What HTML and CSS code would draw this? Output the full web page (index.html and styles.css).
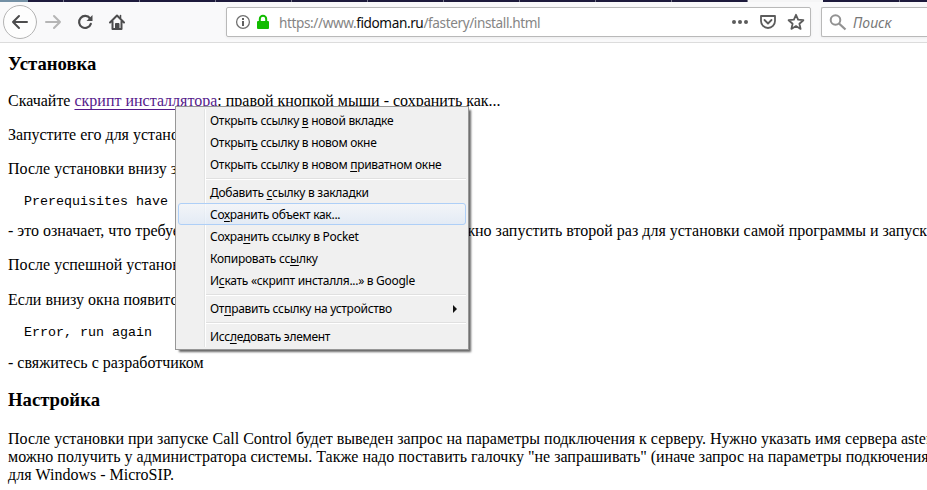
FILE: index.html
```
<!DOCTYPE html>
<html lang="ru">
<head>
<meta charset="utf-8">
<title>Установка</title>
<link rel="stylesheet" href="styles.css">
</head>
<body>
<div class="tabs"><i class="tab-first"></i><i class="tab-bg"></i><i class="tab-active"></i><i class="tab-bg tab-last"></i></div>
<header class="toolbar">
  <nav class="nav">
    <svg width="136" height="39" viewBox="0 3 136 39" fill="none" stroke="#4c4c4d" stroke-width="2" stroke-linecap="round" stroke-linejoin="round">
      <circle cx="20" cy="22" r="16.500" fill="#fdfdfd" stroke="#b4b4b4" stroke-width="1"/>
      <path d="M27 22H13M19 16l-6 6 6 6"/>
      <path stroke="#b5b5b5" d="M46 22h14M54 16l6 6-6 6"/>
      <path d="M90 18.500a6 6 0 1 0 .8 5.300" stroke-width="2.200"/>
      <path d="M92.500 15v6h-6z" fill="#4c4c4d" stroke="none"/>
      <path d="M110 22.500l7-7 7 7M112.500 21.500v7.500h9v-7.500"/>
      <path d="M120.500 15.500v2.500" stroke-width="1.500"/>
      <path d="M115.500 29v-5.500h3.500v5.500z" fill="#4c4c4d" stroke-width="1"/>
    </svg>
  </nav>
  <div class="urlbar">
    <svg width="42" height="28" viewBox="227 8 42 28">
      <circle cx="243" cy="22" r="6.400" fill="none" stroke="#707070" stroke-width="1.300"/>
      <path fill="#606060" d="M242 18h2v2h-2zM242 21h2v5h-2z"/>
      <rect x="257" y="21" width="12" height="8" rx="1" fill="#12bc00"/>
      <path d="M259.800 22v-3a3.200 3.200 0 0 1 6.400 0v3" fill="none" stroke="#12bc00" stroke-width="2"/>
    </svg>
    <span class="url">https://www.<b>fidoman.ru</b>/fastery/install.html</span>
    <svg class="actions" width="76" height="28" viewBox="730 8 76 28" fill="none" stroke="#5c5c5c" stroke-width="1.800" stroke-linejoin="round" stroke-linecap="round">
      <g fill="#5c5c5c" stroke="none"><circle cx="734" cy="22" r="2"/><circle cx="740" cy="22" r="2"/><circle cx="746" cy="22" r="2"/></g>
      <path d="M761 16h14v5a7 7 0 0 1-14 0z"/><path d="M764.500 20l3.500 3.500 3.500-3.500"/>
      <path d="M796 14.800l2.100 4.900 5.300.5-4 3.500 1.200 5.200-4.600-2.800-4.600 2.800 1.200-5.200-4-3.500 5.300-.5z"/>
    </svg>
  </div>
  <div class="search">
    <svg width="18" height="28" viewBox="829 8 18 28" fill="none" stroke="#929292" stroke-width="2"><circle cx="835.500" cy="20" r="4.800"/><path d="M839 23.500l6.500 6" stroke-width="2.300"/></svg>
    <span>Поиск</span>
  </div>
</header>
<main>
  <h3>Установка</h3>
  <p>Скачайте <a>скрипт инсталлятора</a>: правой кнопкой мыши - сохранить как...</p>
  <p>Запустите его для установки</p>
  <p>После установки внизу за</p>
  <pre>Prerequisites have</pre>
  <p class="split"><span class="split-start">- это означает, что требуется</span><span>жно запустить второй раз для установки самой программы и запуск</span></p>
  <p>После успешной установки</p>
  <p class="late">Если внизу окна появится</p>
  <pre>Error, run again</pre>
  <p>- свяжитесь с разработчиком</p>
  <h3 class="second">Настройка</h3>
  <p>После установки при запуске Call Control будет выведен запрос на параметры подключения к серверу. Нужно указать имя сервера asterisk<br>можно получить у администратора системы. Также надо поставить галочку "не запрашивать" (иначе запрос на параметры подкючения<br>для Windows - MicroSIP.</p>
</main>
<div class="menu">
  <div class="item"><span>Открыть ссылку <u>в</u> новой вкладке</span></div>
  <div class="item"><span>Открыт<u>ь</u> ссылку в новом окне</span></div>
  <div class="item"><span>Открыть ссылку в новом <u>п</u>риватном окне</span></div>
  <div class="sep"></div>
  <div class="item"><span>Добавить <u>с</u>сылку в закладки</span></div>
  <div class="item active"><span>Со<u>х</u>ранить объект как...</span></div>
  <div class="item"><span>Сохра<u>н</u>ить ссылку в Pocket</span></div>
  <div class="item"><span>Копировать сс<u>ы</u>лку</span></div>
  <div class="item"><span>И<u>с</u>кать «скрипт инсталля...» в Google</span></div>
  <div class="sep"></div>
  <div class="item"><span>От<u>п</u>равить ссылку на устройство</span><i class="arrow"></i></div>
  <div class="sep"></div>
  <div class="item"><span>Исс<u>л</u>едовать элемент</span></div>
</div>
</body>
</html>
```
FILE: styles.css
```
* { box-sizing: border-box; }
body { margin: 0; width: 927px; height: 490px; overflow: hidden; background: #fff; color: #000; font: 16px/18px "Liberation Serif", serif; }
.tabs { display: flex; height: 2px; background: #1d1a3c; }
.tabs i { flex: none; }
.tab-first { width: 28px; background: #7390a5; }
.tab-bg { width: 720px; background: repeating-linear-gradient(90deg, transparent 0 35px, #77778a 35px 36px, transparent 36px 76px); }
.tab-active { width: 75px; background: #f5f5f6; }
.tabs .tab-last { width: 104px; background-position: 41px 0; background-repeat: no-repeat; }
.toolbar { display: flex; height: 41px; background: #f9f9fa; border-bottom: 1px solid #dcdcdc; padding-top: 5px; }
.nav { width: 226px; margin-top: -4px; height: 39px; }
.nav svg, .urlbar svg, .search svg { display: block; flex: none; }
.urlbar, .search { display: flex; height: 30px; background: #fff; border: 1px solid #b9b9b9; border-radius: 2px; box-shadow: 0 1px 3px rgba(0,0,0,.06); font: 13.6px/30px "Noto Sans", sans-serif; }
.urlbar { width: 585px; color: #858585; }
.url { margin-left: 10px; white-space: nowrap; letter-spacing: -.4px; }
.url b { font-weight: 400; color: #0c0c0d; }
.urlbar .actions { margin-left: auto; margin-right: 4px; }
.search { margin-left: 10px; flex: 1; padding-left: 7px; border-right: 0; border-radius: 2px 0 0 2px; color: #777; font-size: 14px; font-style: italic; }
.search span { margin-left: 6px; }
main { padding: 10px 0 0 8px; white-space: nowrap; }
h3 { margin: 0 0 18px; font-size: 18.72px; line-height: 21px; }
p { margin: 0 0 16px; }
a { color: #551a8b; text-decoration: underline; text-underline-offset: 3px; }
pre { margin: 17px 0 14px 16px; font: 13.333px/13px "Liberation Mono", monospace; }
.split { display: flex; }
.split span { flex: none; }
.split .split-start { width: 456px; }
.late { margin-top: 17px; }
.late + pre { margin-bottom: 15px; }
.second { margin: 17px 0 20px; }
.menu { position: absolute; left: 175px; top: 106px; width: 294px; height: 244px; padding: 2px; border: 1px solid #979797; background: linear-gradient(90deg, transparent 28px, #e2e3e3 28px 29px, #fff 29px 30px, transparent 30px) 0 2px / 100% 238px no-repeat, #f0f0f0; box-shadow: 3px 3px 2px -1px rgba(0,0,0,.6); font: 12px/22px "Noto Sans", sans-serif; letter-spacing: -.29px; }
.item { display: flex; align-items: center; height: 22px; padding: 2px 9px 0 32px; white-space: nowrap; }
.item.active { padding: 2px 8px 0 31px; border: 1px solid #aecff7; border-radius: 3px; background: linear-gradient(rgba(244,247,251,.7), rgba(222,233,247,.7)); }
.item u { text-underline-offset: 2px; }
.sep { height: 6px; margin-left: 28px; background: linear-gradient(transparent 3px, #e0e0e0 3px 4px, #fff 4px 5px, transparent 5px); }
.arrow { margin-left: auto; border: 4px solid transparent; border-left-color: #111; border-right: 0; }
```
